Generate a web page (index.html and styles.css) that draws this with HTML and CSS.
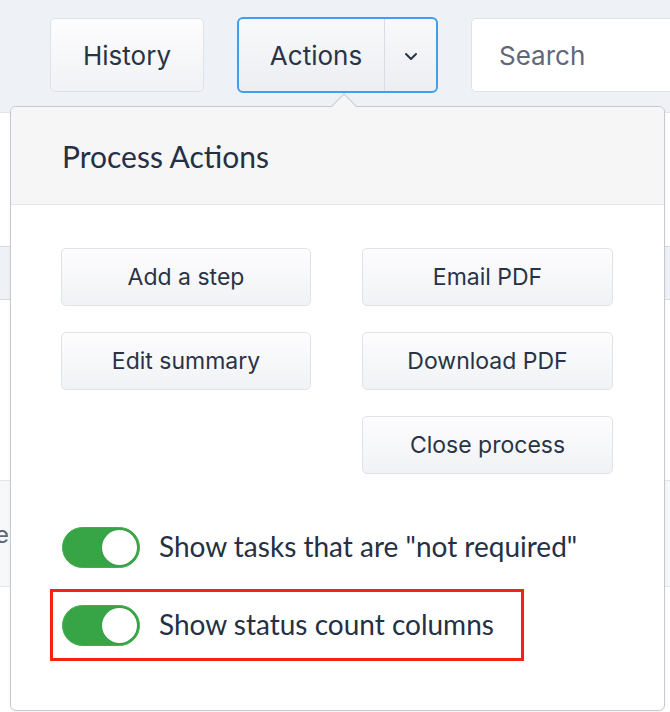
FILE: index.html
```html
<!DOCTYPE html>
<html>
<head>
<meta charset="utf-8">
<link rel="stylesheet" href="styles.css">
</head>
<body>
<div class="topbar">
  <button class="btn btn-history">History</button>
  <div class="split">
    <span class="split-main">Actions</span>
    <span class="split-caret">
      <svg width="14" height="9" viewBox="0 0 14 9"><path d="M2 2 L7 7 L12 2" fill="none" stroke="#2a3346" stroke-width="2" stroke-linecap="round" stroke-linejoin="round"/></svg>
    </span>
  </div>
  <div class="search">Search</div>
</div>
<div class="page">
  <div class="band band-a"></div>
  <div class="band band-b"><span class="edge-text">e</span></div>
</div>

<div class="popover">
  <div class="arrow"></div>
  <div class="pop-header">Process Actions</div>
  <div class="pop-body">
    <div class="grid">
      <button class="btn act">Add a step</button>
      <button class="btn act">Email PDF</button>
      <button class="btn act">Edit summary</button>
      <button class="btn act">Download PDF</button>
      <span class="empty"></span>
      <button class="btn act">Close process</button>
    </div>
    <div class="toggles">
      <div class="trow">
        <span class="toggle"><span class="knob"></span></span>
        <span class="tlabel">Show tasks that are "not required"</span>
      </div>
      <div class="trow highlight">
        <span class="toggle"><span class="knob"></span></span>
        <span class="tlabel">Show status count columns</span>
      </div>
    </div>
  </div>
</div>
</body>
</html>
```
FILE: styles.css
```css
* { box-sizing: border-box; }
html, body { margin: 0; padding: 0; }
body {
  width: 670px;
  height: 712px;
  overflow: hidden;
  background: #ffffff;
  font-family: Inter, "Liberation Sans", sans-serif;
  color: #2a3346;
  position: relative;
}
.topbar {
  height: 113px;
  background: #eef1f5;
  border-bottom: 1px solid #e2e6eb;
  display: flex;
  align-items: flex-start;
  padding: 17px 0 0 50px;
  white-space: nowrap;
}
.btn {
  font-family: Inter, "Liberation Sans", sans-serif;
  color: #2a3346;
  background: linear-gradient(#fdfdfe, #f1f2f5);
  border: 1px solid #dfe3e8;
  border-radius: 5px;
  padding: 0;
  display: flex;
  align-items: center;
  justify-content: center;
}
.btn-history {
  width: 154px;
  height: 74px;
  margin-top: 1px;
  font-size: 26px;
  flex: none;
}
.split {
  margin-left: 33px;
  width: 201px;
  height: 76px;
  border: 2px solid #3e9ff0;
  border-radius: 6px;
  display: flex;
  background: linear-gradient(#f8f9fa, #eceef2);
  flex: none;
}
.split-main {
  width: 146px;
  display: flex;
  align-items: center;
  justify-content: center;
  font-size: 26px;
  border-right: 1px solid #d9dde3;
  padding-left: 9px;
}
.split-caret {
  flex: 1;
  display: flex;
  align-items: center;
  justify-content: center;
  padding-top: 2px;
}
.search {
  margin-left: 33px;
  margin-top: 1px;
  width: 240px;
  height: 74px;
  background: #fff;
  border: 1px solid #dfe3e8;
  border-radius: 5px;
  display: flex;
  align-items: center;
  padding-left: 27px;
  font-size: 26px;
  color: #5f6876;
  flex: none;
}
.page { display: flex; flex-direction: column; }
.band-a {
  margin-top: 133px;
  height: 54px;
  background: #eef1f5;
  border-top: 1px solid #d6dbe2;
  border-bottom: 1px solid #d6dbe2;
}
.band-b {
  margin-top: 180px;
  height: 107px;
  background: #f7f8fa;
  border-top: 1px solid #e2e5ea;
  border-bottom: 1px solid #e2e5ea;
  display: flex;
  align-items: center;
}
.edge-text {
  font-size: 24px;
  color: #5f6876;
  margin-left: -5px;
  margin-top: 2px;
}

.popover {
  position: absolute;
  left: 10px;
  top: 106px;
  width: 655px;
  height: 605px;
  background: #fff;
  border: 1px solid #c6cad0;
  border-radius: 6px;
  box-shadow: 0 1px 3px rgba(0,0,0,0.06);
}
.arrow {
  position: absolute;
  left: 324px;
  top: -10px;
  width: 18px;
  height: 18px;
  background: #f6f6f7;
  border-left: 1px solid #c6cad0;
  border-top: 1px solid #c6cad0;
  transform: rotate(45deg);
}
.pop-header {
  position: relative;
  height: 98px;
  background: #f6f6f7;
  border-bottom: 1px solid #e4e6e9;
  border-radius: 6px 6px 0 0;
  padding-left: 51px;
  display: flex;
  align-items: center;
  font-family: Lato, "Open Sans", sans-serif;
  font-size: 30px;
  color: #253044;
  padding-bottom: 0;
}
.pop-body {
  padding: 43px 0 0 50px;
}
.grid {
  display: grid;
  grid-template-columns: 250px 251px;
  column-gap: 51px;
  row-gap: 26px;
}
.act {
  height: 58px;
  font-size: 23px;
}
.toggles {
  margin-top: 53px;
  display: flex;
  flex-direction: column;
  gap: 21px;
  align-items: flex-start;
}
.trow {
  display: flex;
  align-items: center;
  gap: 19px;
  padding-left: 1px;
}
.highlight {
  margin-left: -11px;
  border: 3px solid #f5240e;
  padding: 13px 27px 12px 9px;
}
.toggle {
  width: 78px;
  height: 41px;
  border-radius: 21px;
  background: #37a546;
  border: 1px solid #43ae4f;
  position: relative;
  flex: none;
}
.knob {
  position: absolute;
  right: 2px;
  top: 2px;
  width: 35px;
  height: 35px;
  border-radius: 50%;
  background: #fff;
  box-shadow: 0 0 1px rgba(0,0,0,0.25);
}
.tlabel {
  font-family: Lato, "Open Sans", sans-serif;
  font-size: 28px;
  color: #253044;
  white-space: nowrap;
  line-height: 1;
  margin-top: -3px;
}
```
